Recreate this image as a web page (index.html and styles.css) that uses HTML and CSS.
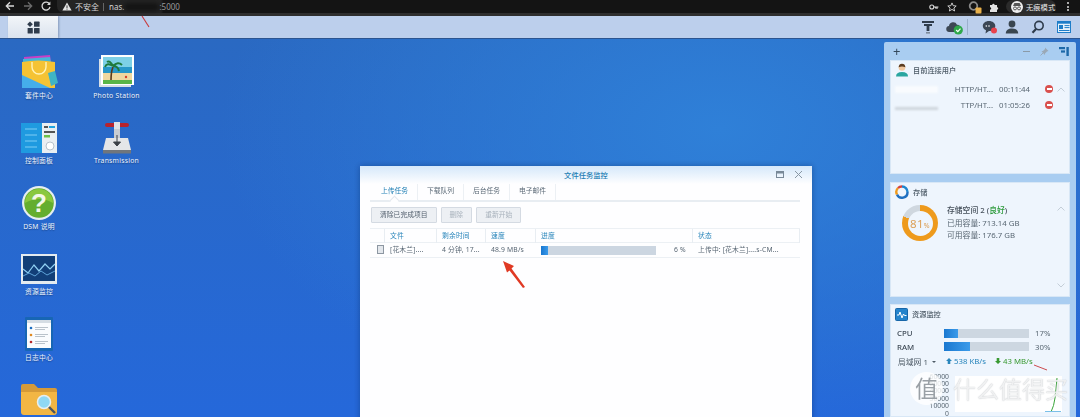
FILE: index.html
```html
<!DOCTYPE html>
<html lang="zh-CN">
<head>
  <meta charset="UTF-8">
  <title>Synology DSM</title>
  <link rel="stylesheet" href="styles.css">
</head>
<body>
  <div class="browser-bar">
    <div class="nav-icon">
      <svg width="12" height="12" viewBox="0 0 12 12"><path d="M10 6H2.500M6 2.300L2.300 6 6 9.700" fill="none" stroke="#d8d8d8" stroke-width="1.300"/></svg>
    </div>
    <div class="nav-icon">
      <svg width="12" height="12" viewBox="0 0 12 12"><path d="M2 6h7.500M6 2.300L9.700 6 6 9.700" fill="none" stroke="#6b6b6b" stroke-width="1.300"/></svg>
    </div>
    <div class="nav-icon">
      <svg width="12" height="12" viewBox="0 0 12 12"><path d="M9.600 4.200A4 4 0 1 0 10 6.800" fill="none" stroke="#d8d8d8" stroke-width="1.300"/><path d="M10.400 1.600v3.400H7z" fill="#d8d8d8"/></svg>
    </div>
    <div class="url-pill">
      <svg width="10" height="9" viewBox="0 0 10 9"><path d="M5 .5L9.600 8.600H.4z" fill="#e4e4e4"/><path d="M5 3.400v2.600M5 6.600v1" stroke="#222" stroke-width=".9"/></svg>
      <span class="url-warn">不安全</span>
      <span class="url-sep"></span>
      <span class="url-host">nas.</span>
      <span class="url-blur"></span>
      <span class="url-port">:5000</span>
    </div>
    <div class="browser-right">
      <svg class="ext-pass" width="10" height="8" viewBox="0 0 10 8"><circle cx="2.800" cy="4" r="2" fill="none" stroke="#ddd" stroke-width="1.100"/><path d="M4.800 4h4.600M8 4v2M6.600 4v1.500" stroke="#ddd" stroke-width="1.100"/></svg>
      <svg width="10" height="10" viewBox="0 0 10 10"><path d="M5 .9l1.200 2.800 3 .3-2.300 2 .7 3L5 7.400 2.400 9l.7-3-2.300-2 3-.3z" fill="none" stroke="#ddd" stroke-width=".9"/></svg>
      <svg class="ext-key" width="14" height="14" viewBox="0 0 14 14"><circle cx="5.500" cy="6" r="3.800" fill="none" stroke="#8a8a8a" stroke-width="1.800"/><rect x="7.500" y="7.500" width="6" height="6" rx="1" fill="#e8b04a"/></svg>
      <svg width="10" height="10" viewBox="0 0 10 10"><path d="M1 3h2.200a1.200 1.200 0 1 1 2.400 0H8v2.200a1.200 1.200 0 1 1 0 2.400V10H1V7.600a1.200 1.200 0 1 0 0-2.400z" fill="#e2e2e2"/></svg>
      <div class="incognito">
        <span class="incognito-face">
          <svg width="10" height="9" viewBox="0 0 10 9"><path d="M2.400 1h5.200L9 4H1z" fill="#555"/><circle cx="3" cy="6.400" r="1.500" fill="none" stroke="#555"/><circle cx="7" cy="6.400" r="1.500" fill="none" stroke="#555"/></svg>
        </span>
        <span>无痕模式</span>
      </div>
      <div class="dots"><i></i><i></i><i></i></div>
    </div>
  </div>

  <div class="taskbar">
    <div class="start-btn">
      <svg width="13" height="13" viewBox="0 0 13 13" fill="#2f3c4c"><path d="M3 .4L5.800 3.200 3 6 .2 3.200z"/><rect x="7" y=".6" width="5.600" height="5.200" rx=".6"/><rect x=".6" y="7" width="5.200" height="5.600" rx=".6"/><rect x="7" y="7" width="5.600" height="5.600" rx=".6"/></svg>
    </div>
    <div class="tray">
      <svg class="tray-filter" width="14" height="14" viewBox="0 0 14 14" fill="#2f3c4c"><path d="M1 1h12v2H1zM3 4h8v2H3z"/><rect x="5.600" y="6" width="2.800" height="5"/><rect x="5" y="12" width="4" height="1.600" fill="#7d8a9a"/></svg>
      <svg class="tray-cloud" width="18" height="15" viewBox="0 0 18 15"><path d="M3.500 12A3 3 0 0 1 3 6a4.200 4.200 0 0 1 8-1.300A3 3 0 0 1 14 9v3z" fill="#3d4854"/><circle cx="12.300" cy="10" r="4.600" fill="#2fa84a"/><path d="M10.200 10l1.600 1.600 2.700-3" fill="none" stroke="#fff" stroke-width="1.200"/></svg>
      <span class="tray-sep"></span>
      <svg class="tray-chat" width="16" height="15" viewBox="0 0 16 15"><path d="M7 1c3.600 0 6.300 2.200 6.300 5S10.600 11 7 11L3.500 13.500 4 10.300C2 9.400 .8 7.900 .8 6 .8 3.200 3.400 1 7 1z" fill="#3b4654"/><circle cx="4.300" cy="6" r=".8" fill="#fff"/><circle cx="7" cy="6" r=".8" fill="#fff"/><circle cx="12" cy="10.500" r="3" fill="#e8424c"/></svg>
      <svg class="tray-user" width="14" height="14" viewBox="0 0 14 14" fill="#39454f"><circle cx="7" cy="4" r="3.400"/><path d="M.8 13.500c0-3.400 2.500-5 6.200-5s6.200 1.600 6.200 5z"/></svg>
      <svg class="tray-search" width="14" height="14" viewBox="0 0 14 14"><circle cx="8" cy="5.600" r="4.200" fill="none" stroke="#2f3c4c" stroke-width="1.600"/><path d="M5 9L1.500 12.800" stroke="#2f3c4c" stroke-width="2.200"/></svg>
      <svg class="tray-card" width="14" height="12" viewBox="0 0 14 12"><rect x=".5" y=".5" width="13" height="11" fill="#e6f1fb" stroke="#1e7dc8"/><rect x=".5" y=".5" width="13" height="2.200" fill="#1e7dc8"/><rect x="2" y="4" width="4" height="4" fill="#1e7dc8"/><path d="M7.500 4.600h5M7.500 6.600h5M2 9.500h10.500" stroke="#1e7dc8"/></svg>
    </div>
  </div>

  <div class="desktop">
    <div class="app-grid">
      <div class="app">
        <svg class="app-icon" viewBox="0 0 38 38"><path d="M4 4l26-2 1 8H4z" fill="#c93fc5"/><path d="M3 6l27-2 1 6H3z" fill="#45b6d8"/><path d="M2 9q16-3 33 0v26H2z" fill="#f5c334"/><path d="M2 22l28 13H2z" fill="#45aeea"/><path d="M12 9v5a7 7 0 0 0 14 0V9" fill="none" stroke="#fff3b5" stroke-width="1.400"/><path d="M28 20l7-2 3 12-7 3z" fill="#3fb4c4"/></svg>
        <span class="app-name">套件中心</span>
      </div>
      <div class="app">
        <svg class="app-icon" viewBox="0 0 38 38"><rect x="1" y="6" width="32" height="28" fill="#d7dfe6"/><rect x="3" y="2" width="33" height="30" fill="#fff"/><rect x="5" y="4" width="29" height="14" fill="#7dd0e6"/><rect x="5" y="14" width="29" height="6" fill="#2897c8"/><rect x="5" y="20" width="29" height="7" fill="#f0d8a0"/><rect x="5" y="27" width="29" height="4" fill="#59b548"/><path d="M13 27q0-8 2-13" fill="none" stroke="#5a3a1c" stroke-width="1.600"/><path d="M15 13Q9 9 7 14M15 13q-3-6-6-4M15 13q5-5 9-1M15 13q5 0 6 5" fill="none" stroke="#1f7a3c" stroke-width="2"/><circle cx="28" cy="24" r="1.200" fill="#d8402c"/></svg>
        <span class="app-name">Photo Station</span>
      </div>
      <div class="app">
        <svg class="app-icon" viewBox="0 0 38 38"><rect x="1" y="5" width="21" height="30" fill="#1f9ae0"/><rect x="22" y="5" width="15" height="30" fill="#e9eef2"/><path d="M5 11h12M5 17h12M5 23h12M5 29h12" stroke="#7fcdf5"/><rect x="24" y="8" width="4" height="2" fill="#555"/><rect x="29" y="8" width="6" height="2" fill="#22a5e0"/><rect x="24" y="13" width="11" height="2" fill="#555"/><rect x="24" y="17" width="6" height="2.500" fill="#6cc04a"/><circle cx="30" cy="28" r="4" fill="#fff" stroke="#b8c3cc"/></svg>
        <span class="app-name">控制面板</span>
      </div>
      <div class="app">
        <svg class="app-icon" viewBox="0 0 38 38"><rect x="16" y="5" width="6" height="18" fill="#c8cdd2"/><rect x="7" y="5" width="24" height="4" rx="2" fill="#b8232c"/><rect x="16" y="4" width="6" height="7" fill="#dfe3e6"/><path d="M8 20h22l3 12H5z" fill="#e4e6e8"/><rect x="5" y="32" width="28" height="3.500" fill="#70767c"/><path d="M19 17v10M15.500 24l3.500 4 3.500-4z" stroke="#3b4046" fill="#3b4046"/></svg>
        <span class="app-name">Transmission</span>
      </div>
      <div class="app">
        <svg class="app-icon" viewBox="0 0 38 38"><circle cx="19" cy="19" r="17" fill="#e6eef0"/><circle cx="19" cy="19" r="14.800" fill="#64ae2e"/><path d="M5 19a14 14 0 0 1 28 0q-14-8-28 0z" fill="#8ac83f"/><text x="19" y="28" class="help-mark">?</text></svg>
        <span class="app-name">DSM 说明</span>
      </div>
      <div class="app app-empty"></div>
      <div class="app">
        <svg class="app-icon" viewBox="0 0 38 38"><rect x="1" y="5" width="36" height="30" fill="#e4ebf0"/><rect x="3" y="7" width="32" height="25" fill="#123f78"/><path d="M3 20l5 4 6-8 5 6 6-7 5 5 5-5" fill="none" stroke="#8fd0f2" stroke-width="1.200"/><path d="M3 27l6-3 6 3 6-5 6 4 8-4" fill="none" stroke="#5ea3d8"/></svg>
        <span class="app-name">资源监控</span>
      </div>
      <div class="app app-empty"></div>
      <div class="app">
        <svg class="app-icon" viewBox="0 0 38 38"><rect x="5" y="2" width="28" height="34" rx="1" fill="#1766b4"/><rect x="7" y="5" width="24" height="28" fill="#fafcfe"/><rect x="7" y="5" width="24" height="3" fill="#d5dde4"/><circle cx="11" cy="13" r="1.300" fill="#1f6fc0"/><circle cx="11" cy="20" r="1.300" fill="#e08a22"/><circle cx="11" cy="27" r="1.300" fill="#b8282a"/><path d="M15 12.500h13M15 14.500h10M15 19.500h13M15 21.500h10M15 26.500h13M15 28.500h10" stroke="#aab4be" stroke-width=".8"/></svg>
        <span class="app-name">日志中心</span>
      </div>
      <div class="app app-empty"></div>
      <div class="app">
        <svg class="app-icon" viewBox="0 0 38 38"><path d="M1 6q0-2 2-2h11l4 4h17q2 0 2 2v6H1z" fill="#d59a38"/><path d="M1 12h36v20q0 3-3 3H4q-3 0-3-3z" fill="#f2b644"/><circle cx="24" cy="22" r="6.500" fill="#8fd8f4" stroke="#e8eef0" stroke-width="1.500"/><path d="M29 27l6 6" stroke="#4a5560" stroke-width="2.400"/></svg>
      </div>
    </div>

    <div class="window">
      <div class="window-title">
        <span>文件任务监控</span>
        <div class="window-ctrl">
          <svg width="8" height="7" viewBox="0 0 8 7"><rect x=".5" y=".5" width="7" height="6" fill="none" stroke="#7a8a98"/><rect x=".5" y=".5" width="7" height="2" fill="#7a8a98"/></svg>
          <svg width="9" height="9" viewBox="0 0 9 9"><path d="M1 1l7 7M8 1L1 8" stroke="#8a98a4"/></svg>
        </div>
      </div>
      <div class="tabs">
        <span class="tab tab-active">上传任务</span>
        <span class="tab">下载队列</span>
        <span class="tab">后台任务</span>
        <span class="tab">电子邮件</span>
      </div>
      <div class="toolbar">
        <span class="btn">清除已完成项目</span>
        <span class="btn btn-off">删除</span>
        <span class="btn btn-off">重新开始</span>
      </div>
      <div class="task-row task-head">
        <span></span>
        <span>文件</span>
        <span>剩余时间</span>
        <span>速度</span>
        <span>进度</span>
        <span>状态</span>
      </div>
      <div class="task-row">
        <span class="file-icon"></span>
        <span>[花木兰]....</span>
        <span>4 分钟, 17...</span>
        <span>48.9 MB/s</span>
        <span class="progress-cell">
          <span class="bar task-bar"><span class="bar-fill" style="width: 6%"></span></span>
          <span class="progress-num">6 %</span>
        </span>
        <span>上传中: [花木兰]....s-CM...</span>
      </div>
    </div>

    <div class="widgets">
      <div class="widgets-head">
        <span class="plus">+</span>
        <div class="widgets-ctrl">
          <span class="minus"></span>
          <svg width="9" height="9" viewBox="0 0 9 9"><path d="M5 .5l3.500 3.500-1.500.5-2 2-.2 1.500L1.500 4.200 3 4l2-2z" fill="#9aa8b6"/><path d="M3 6L.5 8.500" stroke="#9aa8b6"/></svg>
          <svg class="widgets-dock" width="10" height="9" viewBox="0 0 10 9" fill="#1c68a8"><rect y="0" width="6" height="2.200"/><rect x="2" y="3.400" width="4" height="2.200"/><rect x="7.400" width="2.400" height="9"/></svg>
        </div>
      </div>

      <div class="card card-users">
        <div class="card-title">
          <svg width="14" height="14" viewBox="0 0 14 14"><circle cx="7" cy="4.500" r="3.300" fill="#f0c8a0"/><path d="M3.600 4.200Q4 .8 7 .8t3.400 3.400Q7 3 3.600 4.200z" fill="#5a3c20"/><path d="M1 13.500q0-4.500 6-4.500t6 4.500z" fill="#2aa6a0"/></svg>
          <span>目前连接用户</span>
        </div>
        <div class="user-row">
          <span class="user-blur"></span>
          <span class="user-proto">HTTP/HT...</span>
          <span class="user-time">00:11:44</span>
          <span class="kick"></span>
          <svg class="chev" width="8" height="5" viewBox="0 0 8 5"><path d="M.5 4.500L4 1l3.500 3.500" fill="none" stroke="#c4ced8"/></svg>
        </div>
        <div class="user-row">
          <span class="user-blur user-blur-grey"></span>
          <span class="user-proto">TTP/HT...</span>
          <span class="user-time">01:05:26</span>
          <span class="kick"></span>
          <span class="chev"></span>
        </div>
      </div>

      <div class="card card-storage">
        <div class="card-title">
          <svg width="14" height="14" viewBox="0 0 14 14" fill="none" stroke-width="2.400"><path d="M7 1.500a5.500 5.500 0 0 1 5.500 5.500" stroke="#1f86cf"/><path d="M12.500 7A5.500 5.500 0 0 1 2 9.500" stroke="#1f6fc0"/><path d="M2 9.500A5.500 5.500 0 0 1 3 3" stroke="#f09a1c"/><path d="M3 3a5.500 5.500 0 0 1 4-1.500" stroke="#d8423c"/></svg>
          <span>存储</span>
        </div>
        <div class="storage-body">
          <div class="donut"><div class="donut-hole">81<small>%</small></div></div>
          <div class="storage-info">
            <div class="storage-name">存储空间 2 (<em>良好</em>)</div>
            <div>已用容量: 713.14 GB</div>
            <div>可用容量: 176.7 GB</div>
          </div>
          <div class="storage-chevs">
            <svg width="8" height="5" viewBox="0 0 8 5"><path d="M.5 4.500L4 1l3.500 3.500" fill="none" stroke="#c4ced8"/></svg>
            <svg width="8" height="5" viewBox="0 0 8 5"><path d="M.5.500L4 4 7.500.500" fill="none" stroke="#c4ced8"/></svg>
          </div>
        </div>
      </div>

      <div class="card card-monitor">
        <div class="card-title">
          <svg width="13" height="13" viewBox="0 0 13 13"><rect x=".5" y=".5" width="12" height="12" rx="1" fill="#2584cc" stroke="#1766a8"/><path d="M2 7h2l1-3 2 6 1.500-4 1 1.500H11.500" fill="none" stroke="#fff"/></svg>
          <span>资源监控</span>
        </div>
        <div class="meters">
          <div class="meter"><b>CPU</b><span class="bar meter-bar"><span class="bar-fill" style="width: 17%"></span></span><span>17%</span></div>
          <div class="meter"><b>RAM</b><span class="bar meter-bar"><span class="bar-fill" style="width: 30%"></span></span><span>30%</span></div>
        </div>
        <div class="net-row">
          <span class="net-name">局域网 1 <i class="net-caret"></i></span>
          <span class="net-up"><svg width="6" height="6" viewBox="0 0 6 6"><path d="M3 0l3 3H4.300v3H1.700V3H0z"/></svg> 538 KB/s</span>
          <span class="net-down"><svg width="6" height="6" viewBox="0 0 6 6"><path d="M3 6l3-3H4.300V0H1.700v3H0z"/></svg> 43 MB/s</span>
        </div>
        <div class="chart-row">
          <div class="chart-axis"><span>60000</span><span>50000</span><span>40000</span><span>30000</span><span>10000</span><span>0</span></div>
          <div class="chart">
            <svg width="107" height="36" viewBox="0 0 107 36"><path d="M96 36q3-6 4-14t2-20" fill="none" stroke="#3aa63a"/><path d="M90 35.500h16" stroke="#7ac0e8"/></svg>
          </div>
        </div>
      </div>
    </div>
  </div>

  <svg class="arrows" width="1080" height="417" viewBox="0 0 1080 417">
    <path d="M142 16l7 11" stroke="#c8383a" stroke-width="1.100"/>
    <path d="M503 261l11 5-2.500 2.500L525 287l-2 1-13.500-17.500-2.500 2z" fill="#e03a24"/>
    <path d="M1034 365l13 5" stroke="#c8383a" stroke-width=".9"/>
  </svg>
  <div class="watermark">
    <span class="watermark-badge">值</span>
    <span class="watermark-text">什么值得买</span>
  </div>
</body>
</html>
```

FILE: styles.css
```css
* { box-sizing: border-box; }
html, body { margin: 0; height: 100%; }
body { width: 1080px; height: 417px; overflow: hidden; display: flex; flex-direction: column; position: relative; font-family: "Noto Sans", "Noto Sans CJK SC", sans-serif; font-size: 6.800px; color: #4a5866; }
svg { display: block; flex: none; }

/* browser chrome */
.browser-bar { height: 16px; flex: none; display: flex; align-items: flex-start; background: linear-gradient(#141414 13px, #2e2e2e 13px); color: #d4d4d4; padding-left: 1px; }
.nav-icon { width: 18px; height: 12px; display: flex; justify-content: center; }
.url-pill { width: 130px; height: 13px; margin-left: 2px; display: flex; align-items: center; padding-left: 5px; background: linear-gradient(90deg, #242424 80%, #141414 82%); border-radius: 0 0 7px 7px; font-size: 8px; line-height: 1; white-space: nowrap; }
.url-warn { margin-left: 3px; }
.url-sep { width: 1px; height: 8px; flex: none; background: #666; margin: 0 5px 0 4px; }
.url-blur { width: 35px; height: 8px; flex: none; background: #141414; border-radius: 4px; filter: blur(2px); }
.url-port { color: #9a9a9a; position: relative; }
.browser-right { margin-left: auto; height: 13px; display: flex; align-items: center; gap: 7px; padding-right: 11px; }
.ext-pass { margin-right: 1px; }
.ext-key { margin-left: 4px; }
.incognito { width: 50px; height: 13px; display: flex; align-items: center; gap: 3px; padding-left: 5px; background: #2b2b2b; border-radius: 7px; font-size: 7.300px; color: #e8e8e8; white-space: nowrap; }
.incognito-face { width: 12px; height: 12px; flex: none; border-radius: 50%; background: #eee; display: flex; align-items: center; justify-content: center; }
.dots { display: flex; flex-direction: column; gap: 1.500px; margin-left: 4px; }
.dots i { width: 2px; height: 2px; background: #ddd; border-radius: 50%; }

/* dsm taskbar */
.taskbar { height: 23px; flex: none; display: flex; justify-content: space-between; background: #bccfec; border-bottom: 1px solid #2c5590; padding-left: 8px; }
.start-btn { width: 50px; display: flex; align-items: center; justify-content: center; background: linear-gradient(#f2f5f9, #dbe3ee); box-shadow: 1px 0 2px rgba(50, 70, 110, .4); }
.tray { display: flex; align-items: center; padding-right: 9px; }
.tray-filter { margin-right: 11px; }
.tray-sep { width: 1px; height: 16px; background: #9cb0cc; margin: 0 14px 0 3px; }
.tray-chat { margin-right: 7px; }
.tray-user { margin-right: 12px; }
.tray-search { margin-right: 12px; }

/* desktop */
.desktop { flex: 1; position: relative; display: flex; justify-content: space-between; min-height: 0; overflow: hidden; background: radial-gradient(ellipse 500px 300px at 720px 90px, #2f80d8, transparent), linear-gradient(#2a69c2, #2568da); }
.app-grid { display: grid; grid-template-columns: 78px 77px; grid-auto-rows: 65.500px; padding-top: 13.500px; align-content: start; }
.app { display: flex; flex-direction: column; align-items: center; }
.app-icon { width: 38px; height: 38px; }
.app-name { height: 10px; line-height: 10px; color: #eef4fc; font-size: 6.800px; letter-spacing: .25px; white-space: nowrap; text-shadow: 0 1px 1px rgba(10, 40, 90, .5); }
.help-mark { font-family: "Liberation Sans", sans-serif; font-size: 26px; font-weight: bold; fill: #f4f8e8; text-anchor: middle; }

/* task window */
.window { position: absolute; left: 360px; top: 127px; width: 452px; height: 290px; background: #fff; box-shadow: 0 0 6px rgba(10, 40, 90, .4); padding: 0 12px 0 10px; opacity: .999; }
.window-title { height: 18px; margin: 0 -12px 0 -10px; padding-top: 4px; position: relative; text-align: center; font-size: 7.300px; line-height: 10px; font-weight: 500; color: #1f7fb4; background: linear-gradient(#d6e9fa, #fff); }
.window-ctrl { position: absolute; right: 9px; top: 4px; display: flex; align-items: center; gap: 10px; }
.tabs { height: 18px; display: flex; padding-left: 2px; border-bottom: 2px solid #e9eef2; }
.tab { width: 46px; text-align: center; line-height: 14px; color: #5e6c78; border-right: 1px solid #edf1f4; }
.tab-active { color: #1f7fb4; position: relative; }
.tab-active::after { content: ""; position: absolute; left: 19px; bottom: -1px; width: 6px; height: 6px; background: #fff; border-left: 1px solid #e4e9ee; border-top: 1px solid #e4e9ee; transform: translateY(3px) rotate(45deg); }
.toolbar { display: flex; gap: 4px; padding: 5px 0 5px 1px; }
.btn { height: 16px; line-height: 14px; padding: 0 8px; background: #eef1f4; border: 1px solid #d5dbe2; border-radius: 1px; color: #56636f; white-space: nowrap; }
.btn-off { color: #a9b3bc; }
.task-row { height: 15px; display: grid; grid-template-columns: 15px 52px 49px 50px 157px 107px; line-height: 14px; letter-spacing: .15px; border-bottom: 1px solid #edf1f4; color: #5a6874; white-space: nowrap; }
.task-row > span { padding-left: 5px; }
.task-head { color: #2b87bb; border-top: 1px solid #edf1f4; }
.task-head > span { border-right: 1px solid #e9eef2; }
.task-row > .file-icon { width: 7px; height: 9px; margin: 2px 0 0 7px; padding: 0; border: 1px solid #8e98a2; background: #e4e8ec; }
.progress-cell { display: flex; align-items: center; }
.bar { display: block; background: #cdd7e1; overflow: hidden; }
.bar-fill { display: block; height: 100%; background: linear-gradient(90deg, #1a78d0, #3b9bea); }
.task-bar { width: 115px; height: 9px; flex: none; }
.progress-num { margin-left: 18px; }

/* widget panel */
.widgets { width: 192px; margin: 3px 4px 0 auto; padding: 0 6px; background: #a9cdf1; border-radius: 2px 2px 0 0; display: flex; flex-direction: column; gap: 8px; opacity: .999; }
.widgets-head { height: 18px; margin-bottom: -8px; display: flex; justify-content: space-between; align-items: center; }
.plus { font-size: 13px; line-height: 1; color: #33485c; margin-left: 3px; }
.widgets-ctrl { display: flex; align-items: center; gap: 10px; }
.minus { width: 7px; height: 1px; background: #8a9aa8; }
.widgets-dock { margin-right: 1px; }
.card { background: #eef5fd; border: 1px solid #d8e7f6; padding: 1px 4px 0; font-size: 7.800px; color: #5a6874; }
.card-users { height: 114px; }
.card-storage { height: 115px; }
.card-monitor { flex: 1; margin-top: -1px; min-height: 0; overflow: hidden; }
.card-title { height: 16px; display: flex; align-items: center; gap: 4px; font-size: 7.200px; font-weight: 500; color: #4b5965; }

.card-title + .user-row { margin-top: 3px; }
.user-row { height: 16px; display: flex; align-items: center; }
.user-blur { width: 43px; height: 7px; flex: none; background: #f9fbfe; filter: blur(1px); }
.user-blur-grey { height: 3px; margin-top: 6px; background: #cfd5dc; }
.user-proto { flex: 1; text-align: right; white-space: nowrap; }
.user-time { width: 37px; text-align: right; }
.kick { width: 8px; height: 8px; margin-left: 15px; flex: none; border-radius: 50%; background: #d9504e; display: flex; align-items: center; justify-content: center; }
.kick::after { content: ""; width: 5px; height: 1.500px; background: #fff; }
.chev { width: 8px; margin-left: 4px; }

.storage-body { display: flex; }
.donut { width: 36px; height: 36px; margin: 5px 0 0 7px; flex: none; border-radius: 50%; background: conic-gradient(#ee9a1c 0 81%, #cfd7df 81%); display: flex; align-items: center; justify-content: center; }
.donut-hole { width: 25px; height: 25px; border-radius: 50%; background: #eef5fd; text-align: center; line-height: 25px; font-size: 11.500px; letter-spacing: .3px; color: #dca057; white-space: nowrap; }
.donut-hole small { font-size: 7px; }
.storage-info { margin: 4px 0 0 9px; line-height: 12.500px; white-space: nowrap; }
.storage-name { font-weight: 500; color: #454f5a; }
.storage-name em { font-style: normal; color: #2c9a3a; }
.storage-chevs { margin-left: auto; height: 88px; display: flex; flex-direction: column; justify-content: space-between; padding-top: 6px; }

.meters { margin: 4.500px 0 0 2px; }
.meter { height: 13.500px; display: flex; align-items: center; }
.meter b { width: 47px; color: #3f4b57; font-weight: 500; }
.meter-bar { width: 85px; height: 9px; margin-right: 6px; }
.net-row { height: 15px; margin-left: 3px; display: flex; align-items: center; white-space: nowrap; }
.net-name { width: 48px; color: #4d5a66; }
.net-caret { display: inline-block; margin-left: 2px; border: 2px solid transparent; border-top-color: #4d5a66; border-bottom: 0; vertical-align: middle; }
.net-up, .net-down { display: flex; align-items: center; gap: 2px; }
.net-up { color: #2a86bc; fill: #2a86bc; width: 49px; }
.net-down { color: #3a9a32; fill: #3a9a32; }
.chart-row { display: flex; margin-top: 4px; }
.chart-axis { width: 54px; display: flex; flex-direction: column; align-items: flex-end; color: #5a6874; line-height: 7.400px; font-size: 6.800px; }
.chart { width: 107px; height: 36px; margin: 3.500px 0 0 6px; background: #fff; }

/* overlays drawn on top of the screenshot */
.arrows { position: absolute; left: 0; top: 0; pointer-events: none; }
.watermark { position: absolute; left: 910px; top: 372px; display: flex; align-items: center; gap: 10px; pointer-events: none; }
.watermark-badge { width: 33px; height: 33px; border-radius: 50%; background: rgba(255, 255, 255, .8); color: #9aa0a6; text-align: center; font-size: 23px; line-height: 31px; font-family: "Noto Sans CJK SC", sans-serif; }
.watermark-text { font-size: 23px; line-height: 30px; margin-top: -2px; color: rgba(255, 255, 255, .8); font-family: "Noto Sans CJK SC", sans-serif; text-shadow: 0 0 1px rgba(90, 100, 110, .5); white-space: nowrap; }
```
